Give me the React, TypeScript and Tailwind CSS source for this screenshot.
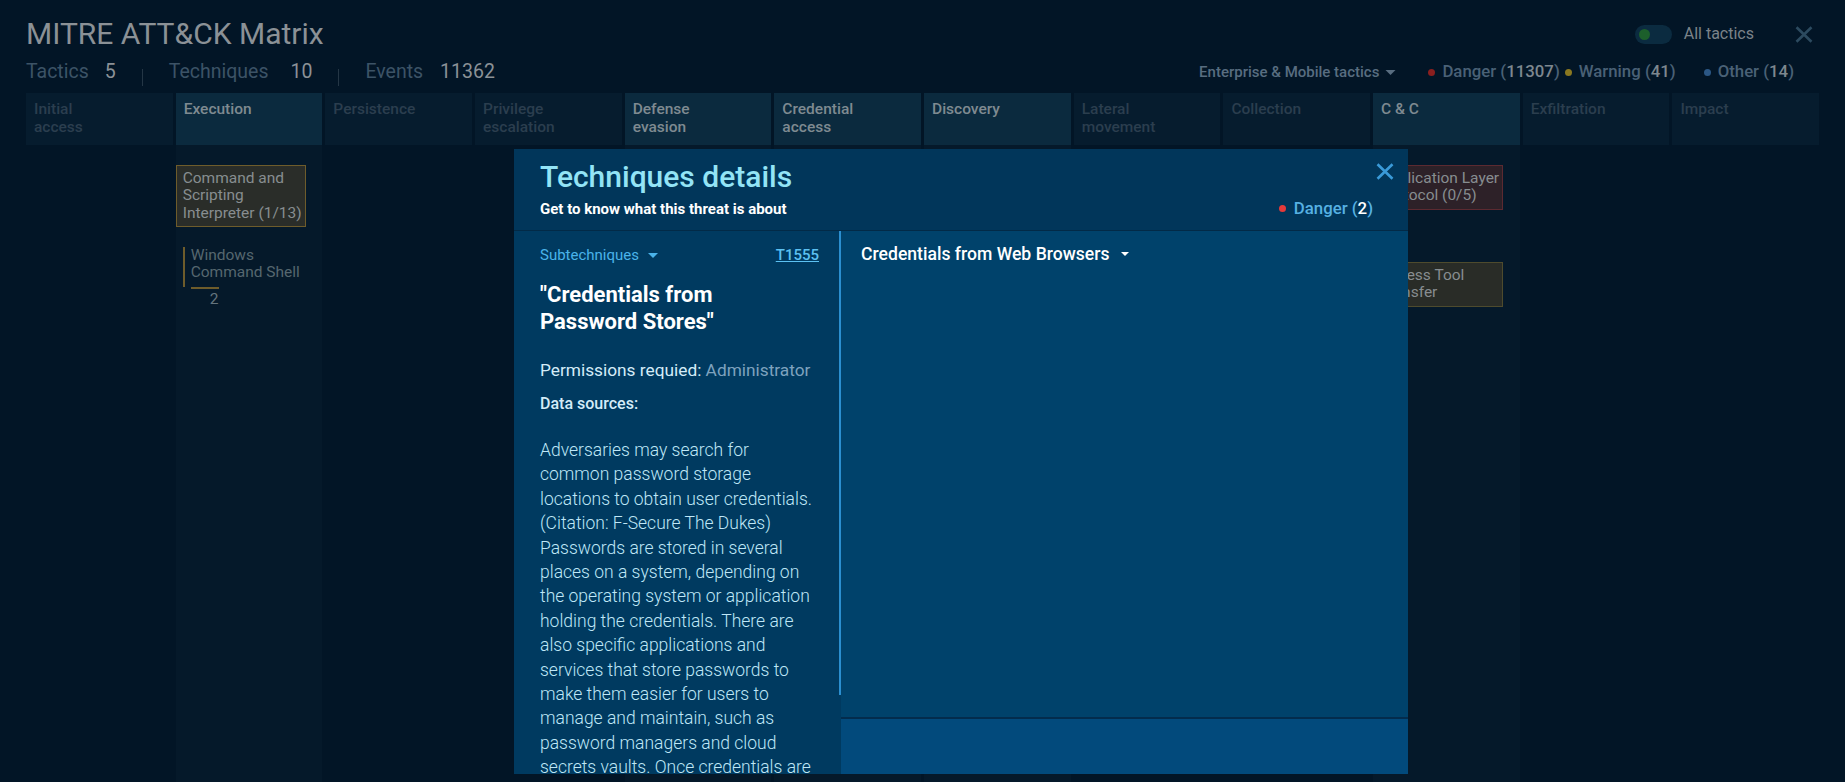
import React from "react";

type Tactic = { lines: string[]; active?: boolean };

const tactics: Tactic[] = [
  { lines: ["Initial", "access"] },
  { lines: ["Execution"], active: true },
  { lines: ["Persistence"] },
  { lines: ["Privilege", "escalation"] },
  { lines: ["Defense", "evasion"], active: true },
  { lines: ["Credential", "access"], active: true },
  { lines: ["Discovery"], active: true },
  { lines: ["Lateral", "movement"] },
  { lines: ["Collection"] },
  { lines: ["C & C"], active: true },
  { lines: ["Exfiltration"] },
  { lines: ["Impact"] },
];

const description = [
  "Adversaries may search for",
  "common password storage",
  "locations to obtain user credentials.",
  "(Citation: F-Secure The Dukes)",
  "Passwords are stored in several",
  "places on a system, depending on",
  "the operating system or application",
  "holding the credentials. There are",
  "also specific applications and",
  "services that store passwords to",
  "make them easier for users to",
  "manage and maintain, such as",
  "password managers and cloud",
  "secrets vaults. Once credentials are",
];

function Caret({ className }: { className?: string }) {
  return (
    <svg viewBox="0 0 10 5" className={className} aria-hidden>
      <path d="M0 0h10L5 5z" fill="currentColor" />
    </svg>
  );
}

function CloseIcon({ className }: { className?: string }) {
  return (
    <svg viewBox="0 0 18 17" className={className} aria-hidden>
      <path d="M1.5 1.2 16.5 15.8M16.5 1.2 1.5 15.8" stroke="currentColor" strokeWidth="2.6" fill="none" />
    </svg>
  );
}

function Card({ tone, children }: { tone: "gold" | "red" | "olive"; children: React.ReactNode }) {
  const tones = {
    gold: "border-[#6e5c2b] bg-[#2a2d29]",
    red: "border-[#5c2a31] bg-[#2d2128]",
    olive: "border-[#4e4b2d] bg-[#292c27]",
  };
  return (
    <div className={`w-[130px] border py-[4px] pl-[6px] text-[15.5px] leading-[17.4px] text-[#878d90] ${tones[tone]}`}>
      {children}
    </div>
  );
}

function Legend({ dot, label, count, className }: { dot: string; label: string; count: string; className?: string }) {
  return (
    <div className={`flex items-center ${className ?? ""}`}>
      <span className={`h-[7px] w-[7px] rounded-full ${dot}`} />
      <span className="ml-[7px] text-[16.8px] font-medium text-[#4a6176]">
        {label} (<span className="text-[#7d878f]">{count}</span>)
      </span>
    </div>
  );
}

export default function App() {
  return (
    <div className="relative flex h-screen w-full flex-col overflow-hidden bg-[#021526] font-[Roboto,sans-serif]">
      {/* top bar */}
      <div className="px-[26px] pt-[15px]">
        <div className="flex items-center justify-between">
          <h1 className="text-[30px] leading-[38px] text-[#8b9196]">MITRE ATT&amp;CK Matrix</h1>
          <div className="mr-[6px] flex items-center">
            <div className="flex h-[19px] w-[37px] items-center rounded-full bg-[#0b2b40] pl-[4px]">
              <span className="h-[11px] w-[11px] rounded-full bg-[#1c5f2b]" />
            </div>
            <span className="ml-[12px] text-[16px] text-[#7b8389]">All tactics</span>
            <CloseIcon className="ml-[41px] h-[17px] w-[18px] text-[#2c4a5f]" />
          </div>
        </div>
        <div className="mt-[7px] flex h-[24px] items-center justify-between">
          <div className="flex items-center text-[19.5px]">
            <span className="text-[#3c5366]">Tactics</span>
            <span className="ml-[16px] text-[#8b9196]">5</span>
            <span className="mx-[26px] mt-[10px] h-[17px] w-px bg-[#243645]" />
            <span className="text-[#3c5366]">Techniques</span>
            <span className="ml-[22px] text-[#8b9196]">10</span>
            <span className="mx-[26px] mt-[10px] h-[17px] w-px bg-[#243645]" />
            <span className="text-[#3c5366]">Events</span>
            <span className="ml-[17px] text-[#8b9196]">11362</span>
          </div>
          <div className="mr-[25px] flex items-center">
            <span className="text-[15px] font-medium text-[#586d80]">Enterprise &amp; Mobile tactics</span>
            <Caret className="ml-[6px] h-[5px] w-[11px] text-[#586d80]" />
            <Legend dot="bg-[#8a1f1f]" label="Danger" count="11307" className="ml-[32px]" />
            <Legend dot="bg-[#8a7820]" label="Warning" count="41" className="ml-[5px]" />
            <Legend dot="bg-[#2b5785]" label="Other" count="14" className="ml-[28px]" />
          </div>
        </div>
      </div>

      {/* matrix */}
      <div className="mt-[9px] flex flex-1 gap-[3px] px-[26px]">
        {tactics.map((t) => (
          <div key={t.lines.join(" ")} className="flex flex-1 flex-col">
            <div
              className={`h-[52px] px-[8px] pt-[7px] text-[15.5px] font-medium leading-[18px] ${
                t.active ? "bg-[#0b2a3e] text-[#7f8a91]" : "bg-[#061c2e] text-[#2b3e4e]"
              }`}
            >
              {t.lines.map((l) => (
                <div key={l}>{l}</div>
              ))}
            </div>
            <div className={`flex-1 pt-[20px] ${t.active ? "bg-[#05192a]" : ""}`}>
              {t.lines[0] === "Execution" && (
                <div>
                  <Card tone="gold">Command and Scripting Interpreter (1/13)</Card>
                  <div className="ml-[7px] mt-[20px] w-[124px] border-l-2 border-[#6e5c2b] pb-[6px] pl-[6px] text-[15.5px] leading-[17px] text-[#56676f]">
                    Windows Command Shell
                  </div>
                  <div className="ml-[15px] h-[2px] w-[28px] bg-[#6e5c2b]" />
                  <div className="ml-[34px] mt-[2px] text-[15.5px] leading-[17px] text-[#64747d]">2</div>
                </div>
              )}
              {t.lines[0] === "C & C" && (
                <div>
                  <Card tone="red">Application Layer Protocol (0/5)</Card>
                  <div className="mt-[52px]">
                    <Card tone="olive">Ingress Tool Transfer</Card>
                  </div>
                </div>
              )}
            </div>
          </div>
        ))}
      </div>

      {/* modal */}
      <div className="absolute left-[514px] top-[149px] flex h-[625px] w-[894px] flex-col">
        <div className="flex h-[82px] justify-between border-b border-[#022a47] bg-[#01365a] pl-[26px]">
          <div className="pt-[10px]">
            <h2 className="text-[30px] font-medium leading-[36px] text-[#93e4f6]">Techniques details</h2>
            <p className="mt-[5px] text-[15px] font-bold leading-[18px] text-white">
              Get to know what this threat is about
            </p>
          </div>
          <div className="flex flex-col items-end pr-[14px] pt-[14px]">
            <CloseIcon className="h-[17px] w-[18px] text-[#3a9ad8]" />
            <div className="mr-[21px] mt-[17px] flex items-center">
              <span className="h-[7px] w-[7px] rounded-full bg-[#e53a3a]" />
              <span className="ml-[8px] text-[16.8px] font-medium leading-[22px] text-[#56b1e3]">
                Danger (<span className="text-white">2</span>)
              </span>
            </div>
          </div>
        </div>

        <div className="flex flex-1 overflow-hidden">
          <div className="flex w-[327px] bg-[#003a60]">
            <div className="flex-1 overflow-hidden pl-[26px] pr-[20px] pt-[14px]">
              <div className="flex items-center justify-between">
                <div className="flex items-center text-[15px] leading-[20px] text-[#4ab3ea]">
                  Subtechniques
                  <Caret className="ml-[9px] h-[5px] w-[10px]" />
                </div>
                <span className="text-[15px] font-medium leading-[20px] text-[#5cc1f2] underline">T1555</span>
              </div>
              <h3 className="mt-[16px] text-[22px] font-bold leading-[27px] text-white">
                "Credentials from
                <br />
                Password Stores"
              </h3>
              <p className="mt-[23px] text-[17.3px] leading-[24px] text-[#d4ecf8]">
                Permissions requied: <span className="text-[#7ea2be]">Administrator</span>
              </p>
              <p className="mt-[10px] text-[16px] font-medium leading-[24px] text-[#d4ecf8]">Data sources:</p>
              <p className="mt-[22px] whitespace-nowrap text-[17.5px] font-light leading-[24.4px] text-[#bfe7f7]">
                {description.map((line) => (
                  <span key={line} className="block">
                    {line}
                  </span>
                ))}
              </p>
            </div>
            <div className="w-[2px]">
              <div className="h-[464px] bg-[#2b8fd0]" />
            </div>
          </div>

          <div className="flex flex-1 flex-col">
            <div className="flex-1 border-b-2 border-[#032c4d] bg-[#00426b] pl-[20px] pt-[11px]">
              <div className="flex items-center text-[17.6px] font-medium leading-[24px] text-white">
                Credentials from Web Browsers
                <Caret className="ml-[11px] h-[4px] w-[8px]" />
              </div>
            </div>
            <div className="h-[55px] bg-[#024a7c]" />
          </div>
        </div>
      </div>
    </div>
  );
}
